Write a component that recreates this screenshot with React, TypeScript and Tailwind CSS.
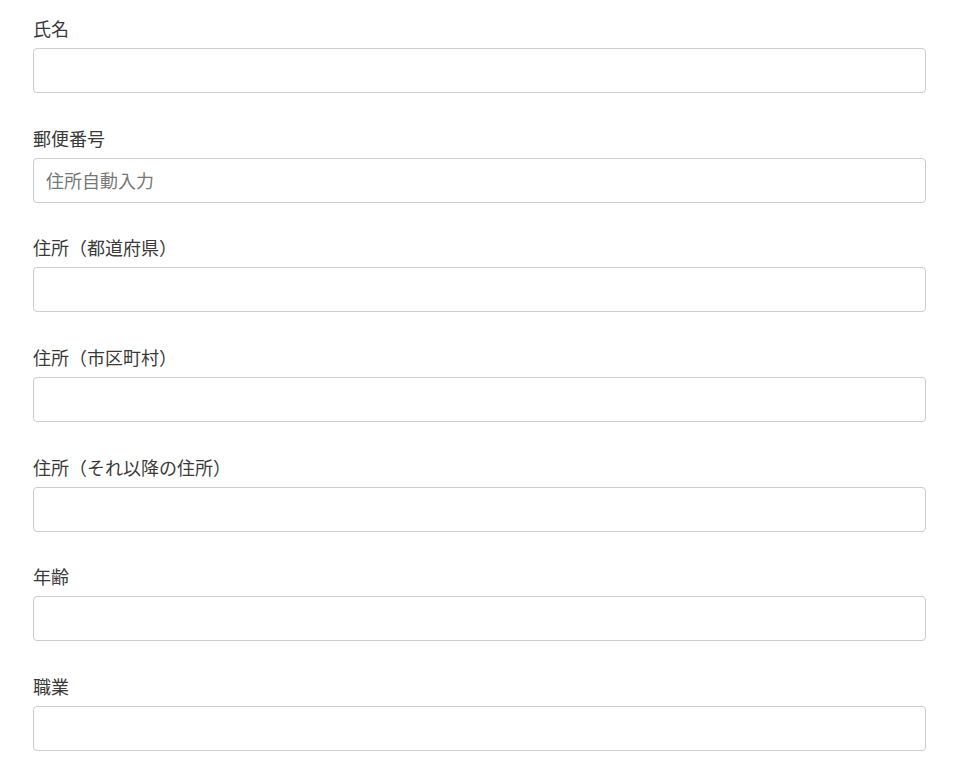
import React from "react";

const fields: { label: string; placeholder?: string }[] = [
  { label: "氏名" },
  { label: "郵便番号", placeholder: "住所自動入力" },
  { label: "住所（都道府県）" },
  { label: "住所（市区町村）" },
  { label: "住所（それ以降の住所）" },
  { label: "年齢" },
  { label: "職業" },
];

export default function App() {
  return (
    <div
      className="min-h-screen bg-white pl-[33px] pr-[29px] pt-[15px]"
      style={{ fontFamily: '"Noto Sans CJK JP", "Noto Sans", sans-serif' }}
    >
      {fields.map((f) => (
        <div key={f.label} className="mb-[31.67px]">
          <label className="block text-[18px] leading-[27px] text-[#3a3a3a] mb-[6px]">
            {f.label}
          </label>
          <input
            type="text"
            placeholder={f.placeholder}
            className="block w-full h-[45px] rounded-[4px] border border-[#cccccc] bg-white px-[12px] text-[18px] text-[#333333] placeholder:text-[#777777] outline-none"
          />
        </div>
      ))}
    </div>
  );
}
